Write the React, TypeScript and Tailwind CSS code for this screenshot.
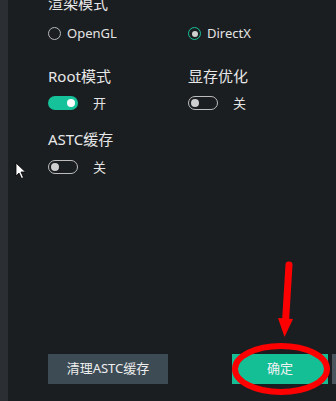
import React from 'react';

const font = { fontFamily: '"Noto Sans", "Noto Sans CJK SC", sans-serif' };

function Radio({ label, checked }: { label: string; checked?: boolean }) {
  return (
    <div className="flex items-center gap-[6px]">
      <span
        className={`flex h-[13px] w-[13px] items-center justify-center rounded-full border-[1.5px] ${
          checked ? 'border-[#16c29a]' : 'border-[#b8b8b8]'
        }`}
      >
        {checked && <span className="h-[6px] w-[6px] rounded-full bg-[#d0d0d0]" />}
      </span>
      <span className="text-[13px] leading-none text-[#e4e4e4]">{label}</span>
    </div>
  );
}

function Toggle({ on }: { on?: boolean }) {
  return (
    <div className="flex items-center">
      {on ? (
        <span className="flex h-[14px] w-[30px] items-center justify-end rounded-full bg-[#16c29a] pr-[3px]">
          <span className="h-[8px] w-[8px] rounded-full bg-white" />
        </span>
      ) : (
        <span className="flex h-[14px] w-[30px] items-center rounded-full border-[1.5px] border-[#bdbdbd] pl-[2px]">
          <span className="h-[8px] w-[8px] rounded-full bg-[#cfcfcf]" />
        </span>
      )}
      <span className="ml-[15px] text-[13px] leading-none text-[#e4e4e4]">{on ? '开' : '关'}</span>
    </div>
  );
}

export default function App() {
  return (
    <div className="relative flex h-[401px] w-[336px] overflow-hidden bg-[#1b1e21]" style={font}>
      <div className="w-2 shrink-0 bg-[#2b2f33]" />
      <div className="flex flex-1 flex-col pl-10">
        <div className="-mt-[7px] text-[15px] leading-[20px] text-[#e8e8e8]">渲染模式</div>
        <div className="mt-[14px] grid grid-cols-[140px_1fr]">
          <Radio label="OpenGL" />
          <Radio label="DirectX" checked />
        </div>
        <div className="mt-[26px] grid grid-cols-[140px_1fr]">
          <div className="flex flex-col">
            <span className="text-[15px] leading-[20px] text-[#e8e8e8]">Root模式</span>
            <div className="mt-[10px]">
              <Toggle on />
            </div>
          </div>
          <div className="flex flex-col">
            <span className="text-[15px] leading-[20px] text-[#e8e8e8]">显存优化</span>
            <div className="mt-[10px]">
              <Toggle />
            </div>
          </div>
        </div>
        <div className="mt-[19px] flex flex-col">
          <span className="text-[15px] leading-[20px] text-[#e8e8e8]">ASTC缓存</span>
          <div className="mt-[11px]">
            <Toggle />
          </div>
        </div>
        <div className="mt-auto mb-[17px] flex items-center">
          <button className="flex h-[30px] w-[120px] items-center justify-center bg-[#3d4b55] text-[13px] text-[#eeeeee]">
            清理ASTC缓存
          </button>
          <button className="ml-[64px] flex h-[30px] w-[96px] items-center justify-center bg-[#14bf96] text-[13px] text-[#f2f2f2]">
            确定
          </button>
          <div className="ml-1 h-[30px] w-[10px] shrink-0 bg-[#4a555d]" />
        </div>
      </div>

      <svg className="absolute left-0 top-0" width="336" height="401" viewBox="0 0 336 401">
        <path d="M289 265 L285.5 322" stroke="#ff0000" strokeWidth="7" strokeLinecap="round" fill="none" />
        <path d="M278 318 L293 319 L284.5 337 Z" fill="#ff0000" />
        <ellipse cx="281" cy="369" rx="46" ry="23" stroke="#ff0000" strokeWidth="6" fill="none" />
      </svg>

      <svg className="absolute left-[15px] top-[162px]" width="12" height="18" viewBox="0 0 12 18">
        <path d="M1 1 L1 14 L4 11 L6.5 16.5 L8.5 15.5 L6 10 L10.5 10 Z" fill="#ffffff" stroke="#000" strokeWidth="0.8" />
      </svg>
    </div>
  );
}
